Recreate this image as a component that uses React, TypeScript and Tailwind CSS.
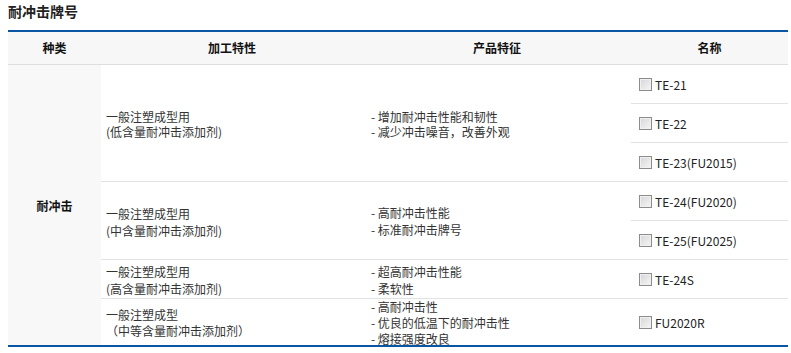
import React from "react";

const font = { fontFamily: '"Noto Sans CJK SC", "Noto Sans", sans-serif' };

function Box() {
  return (
    <span className="inline-block w-[13px] h-[13px] shrink-0 border border-[#8c8c8c] bg-gradient-to-br from-[#d6d6d6] to-[#f6f6f6] shadow-[inset_0_0_0_1px_#f0f0f0]" />
  );
}

function Name({ label, h, border }: { label: string; h: string; border?: boolean }) {
  return (
    <div className={`${h} flex items-center pl-[8px] ${border ? "border-b border-[#e2e2e2]" : ""}`}>
      <Box />
      <span className="ml-[3px] mt-[2px] text-[12px] leading-[14px] text-[#222]">{label}</span>
    </div>
  );
}

type Group = {
  h: string;
  lh: string;
  proc: string[];
  feat: string[];
  names: { label: string; h: string; border?: boolean }[];
  last?: boolean;
};

const groups: Group[] = [
  {
    h: "h-[117px]",
    lh: "leading-[15px]",
    proc: ["一般注塑成型用", "(低含量耐冲击添加剂)"],
    feat: ["- 增加耐冲击性能和韧性", "- 减少冲击噪音，改善外观"],
    names: [
      { label: "TE-21", h: "h-[39px]", border: true },
      { label: "TE-22", h: "h-[39px]", border: true },
      { label: "TE-23(FU2015)", h: "h-[38px]" },
    ],
  },
  {
    h: "h-[78px]",
    lh: "leading-[17px]",
    proc: ["一般注塑成型用", "(中含量耐冲击添加剂)"],
    feat: ["- 高耐冲击性能", "- 标准耐冲击牌号"],
    names: [
      { label: "TE-24(FU2020)", h: "h-[39px]", border: true },
      { label: "TE-25(FU2025)", h: "h-[38px]" },
    ],
  },
  {
    h: "h-[39px]",
    lh: "leading-[17px]",
    proc: ["一般注塑成型用", "(高含量耐冲击添加剂)"],
    feat: ["- 超高耐冲击性能", "- 柔软性"],
    names: [{ label: "TE-24S", h: "h-[38px]" }],
  },
  {
    h: "h-[46px]",
    lh: "leading-[16px]",
    proc: ["一般注塑成型", "（中等含量耐冲击添加剂）"],
    feat: ["- 高耐冲击性", "- 优良的低温下的耐冲击性", "- 熔接强度改良"],
    names: [{ label: "FU2020R", h: "h-[46px]" }],
    last: true,
  },
];

export default function App() {
  return (
    <div className="w-[791px] h-[353px] bg-white overflow-hidden text-[#333]" style={font}>
      <div className="ml-[8px] w-[780px]">
        <div className="h-[30px] text-[14px] font-bold leading-[22px] text-[#222]">耐冲击牌号</div>
        <div className="border-t-2 border-b-2 border-[#0b55a5]">
          <div className="flex h-[33px] bg-[#f7f7f7] border-b border-[#dedede] text-[12px] font-bold text-[#111] items-center">
            <div className="w-[93px] text-center">种类</div>
            <div className="w-[262px] text-center">加工特性</div>
            <div className="w-[268px] text-center">产品特征</div>
            <div className="w-[157px] text-center">名称</div>
          </div>
          <div className="flex">
            <div className="w-[93px] bg-[#f8f8f8] flex items-center justify-center text-[12px] font-bold text-[#111] pt-[2px]">
              耐冲击
            </div>
            <div className="flex flex-col w-[687px]">
              {groups.map((g, i) => (
                <div
                  key={i}
                  className={`flex ${g.h} ${g.last ? "" : "border-b border-[#e2e2e2]"} text-[12px]`}
                >
                  <div className={`w-[262px] pl-[5px] flex flex-col justify-center ${g.lh} pt-[2px]`}>
                    {g.proc.map((t) => (
                      <div key={t}>{t}</div>
                    ))}
                  </div>
                  <div className={`w-[268px] pl-[8px] flex flex-col justify-center ${g.lh} pt-[1px]`}>
                    {g.feat.map((t) => (
                      <div key={t}>{t}</div>
                    ))}
                  </div>
                  <div className="w-[157px] flex flex-col">
                    {g.names.map((n) => (
                      <Name key={n.label} {...n} />
                    ))}
                  </div>
                </div>
              ))}
            </div>
          </div>
        </div>
      </div>
    </div>
  );
}
